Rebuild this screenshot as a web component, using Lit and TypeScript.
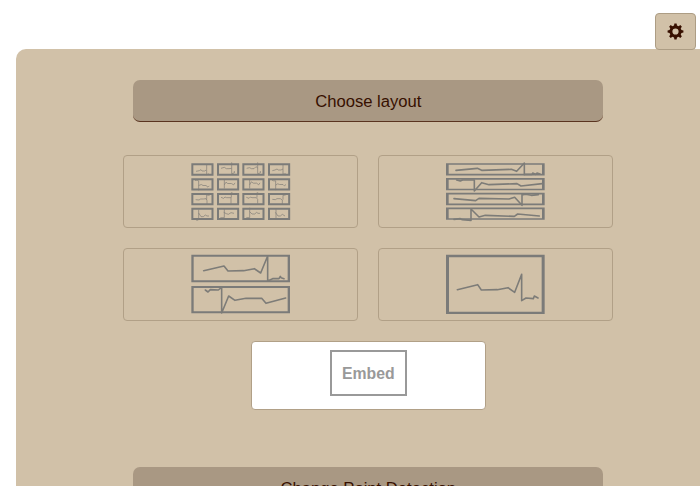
import { LitElement, html, svg, css } from "lit";
import { customElement, property } from "lit/decorators.js";

type Frame = [x: number, y: number, w: number, h: number];
interface Preview {
  box: string;
  sideWidth: number;
  barWidth: number;
  frames: Frame[];
  lines: string[];
  thin?: boolean;
}

const columns = [34, 111, 187, 264];
const rows = [40, 84.5, 129, 173];
const cellTraces = [
  ["M14 24l10 -2l5 -3l3 4l8 0l6 -4V3M46 20v15l6 -4", "M12 15l10 -3l6 4h8l8 -1V-3M44 15V31l8 -2v-6", "M13 15l9 -2l5 3h8l6 -6l5 4V-3M46 14V31l8 -2v-6", "M13 22l8 -2l6 -3l4 3h8l6 -3V2M45 17V33l8 -2"],
  ["M11 7l6 -1l5 2V37M22 22l8 -3l5 3h9l6 5l4 -4", "M11 4h11V31M22 20l5 -8l5 4h11l7 4l4 -6", "M12 4h10V31M22 20l5 -9l6 4h10l6 5l4 -6", "M12 6l5 2h6V36M23 21l6 -4l6 2h10l4 4l5 -4"],
  ["M13 20l10 1l5 -3h8l8 -1l3 6V36M46 20V6l8 1V2", "M12 13l8 3l4 -4l5 2h13V32M43 14V-1l9 4", "M12 13l8 3l4 -4l5 2h13l4 5V32M44 14V-1l9 4", "M13 19l9 1l5 -3h10l6 4V34M45 20V7l8 -1V2"],
  ["M10 34l7 4l5 -2V6M22 16l7 11h7l6 -5l5 3h6", "M10 30h12V1M20 14l8 4l6 2l8 -5l9 2", "M12 30h10V0M22 12l7 7h8l6 -5l4 3h6", "M12 33l6 2h6V5M22 14l8 11h7l6 -5l8 5"],
];

const previews: Preview[] = [
  {
    box: "33 36 300 180",
    sideWidth: 6,
    barWidth: 6,
    thin: true,
    frames: rows.flatMap((y) => columns.map((x): Frame => [x, y, 66.5, 37])),
    lines: [],
  },
  {
    box: "33 36 300 180",
    sideWidth: 8,
    barWidth: 5,
    frames: rows.map((y): Frame => [33, y - 0.5, 296, 37]),
    lines: [
      "M63 61L127 55L140 61L229 58L245 64L268 39V74M268 73H291L293 69L301 73L306 69L315 72",
      "M65 90L76 93L83 90H118V123L140 98L162 104L246 101L258 108L322 101",
      "M57 146L122 152L132 145L222 147L239 142L261 166V133M261 135L272 133L289 136L310 134",
      "M57 208L76 206L82 209L108 211V177L132 201L151 196L238 199L248 192L313 198",
    ],
  },
  {
    box: "33 33 300 180",
    sideWidth: 7,
    barWidth: 6,
    frames: [[34, 32.5, 296, 82], [34, 126, 296, 82]],
    lines: [
      "M71 80L132 66L144 81L191 80L223 74L242 87L263 36V111L278 104H297L301 97L303 101L312 104",
      "M76 138L84 144L91 137L115 138L125 130V207L146 156L165 169L198 163H245L258 178L317 162",
    ],
  },
  {
    box: "33 33 300 180",
    sideWidth: 9,
    barWidth: 7,
    frames: [[33, 32.5, 296, 177.5]],
    lines: ["M67 137L128 122L139 138L187 137L219 131L239 145L260 91V170L273 162L295 164L298 156L309 162"],
  },
];

// Outline of an eight-toothed wheel, centred on the origin.
const gearOutline = (() => {
  const points: string[] = [];
  for (let i = 0; i < 8; i++) {
    for (const [turn, radius] of [[-14, 6.1], [-8, 8], [8, 8], [14, 6.1]]) {
      const a = ((i * 45 + turn) * Math.PI) / 180;
      points.push(`${(radius * Math.sin(a)).toFixed(2)} ${(-radius * Math.cos(a)).toFixed(2)}`);
    }
  }
  return `M${points.join("L")}zM0 -3.1a3.1 3.1 0 1 0 0 6.2a3.1 3.1 0 1 0 0 -6.2z`;
})();

@customElement("layout-preview")
class LayoutPreview extends LitElement {
  @property({ attribute: false }) preview!: Preview;

  static styles = css`
    :host { display: block; width: 100px; height: 60px; }
    svg { display: block; overflow: visible; }
    .frame { fill: #7b7b79; fill-rule: evenodd; }
    .trace { fill: none; stroke: #7d7c78; stroke-width: 4.8; stroke-linejoin: round; stroke-linecap: round; }
    .fine { fill: none; stroke: #7f7c77; stroke-width: 2.6; opacity: 0.8; }
  `;

  render() {
    const p = this.preview;
    return html`<svg width="100" height="60" viewBox=${p.box}>
      ${p.frames.map(([x, y, w, h]) => {
        const s = p.sideWidth;
        const b = p.barWidth;
        return svg`<path class="frame" d=${`M${x} ${y}h${w}v${h}h${-w}zM${x + s} ${y + b}v${h - 2 * b}h${w - 2 * s}v${2 * b - h}z`}></path>`;
      })}
      ${p.lines.map((d) => svg`<path class="trace" d=${d}></path>`)}
      ${p.thin
        ? rows.map((y, r) => columns.map((x, c) =>
            svg`<path class="fine" transform=${`translate(${x} ${y})`} d=${cellTraces[r][c]}></path>`))
        : null}
    </svg>`;
  }
}

@customElement("app-root")
class AppRoot extends LitElement {
  static styles = css`
    :host {
      display: block;
      height: 486px;
      overflow: hidden;
      background: #fff;
      color: #371000;
      font-family: "Liberation Sans", Arial, sans-serif;
      font-size: 16.64px;
    }
    .tabs { display: flex; justify-content: flex-end; height: 49px; padding: 13px 4px 0 0; box-sizing: border-box; }
    .tab {
      display: flex; align-items: center; justify-content: center;
      box-sizing: border-box; width: 41px; height: 37px; flex: none;
      background: #d1c1a8; border: 1px solid #ad9d84; border-radius: 4px;
      position: relative; z-index: 1;
    }
    .gear { display: block; fill: #371000; }
    .panel {
      display: flex; flex-direction: column; align-items: center;
      box-sizing: border-box; width: 704.6px; height: 600px;
      margin-left: 16px; padding-top: 31px;
      background: #d1c1a8; border-radius: 10px;
    }
    .heading {
      box-sizing: border-box; width: 470px; height: 42px; flex: none;
      padding-top: 2px;
      display: flex; align-items: center; justify-content: center;
      background: #a99883; border-radius: 7px;
      border-bottom: 1.5px solid #5a3420;
    }
    .layouts {
      display: grid; grid-template-columns: 235px 235px;
      column-gap: 20px; row-gap: 20px; margin-top: 33px;
    }
    .card {
      box-sizing: border-box; height: 73px; padding-top: 6px;
      display: flex; justify-content: center; align-items: flex-start;
      border: 1px solid #b1a087; border-radius: 4px;
    }
    .embed {
      box-sizing: border-box; width: 235px; height: 69px; margin: 20px 0 57px; padding-top: 8px;
      display: flex; justify-content: center; align-items: flex-start;
      background: #fff; border: 1px solid #b1a087; border-radius: 4px;
    }
    .label {
      box-sizing: border-box; width: 77px; height: 46px; padding-top: 2px;
      display: flex; align-items: center; justify-content: center;
      border: 2px solid #999; color: #999; font-weight: bold; font-size: 15.8px;
    }
  `;

  render() {
    return html`
      <div class="tabs">
        <div class="tab">
          <svg class="gear" width="17" height="17" viewBox="-8.5 -8.5 17 17">
            <path fill-rule="evenodd" d=${gearOutline}></path>
          </svg>
        </div>
      </div>
      <div class="panel">
        <div class="heading">Choose layout</div>
        <div class="layouts">
          ${previews.map((p) => html`<div class="card"><layout-preview .preview=${p}></layout-preview></div>`)}
        </div>
        <div class="embed"><div class="label">Embed</div></div>
        <div class="heading">Change Point Detection</div>
      </div>
    `;
  }
}
